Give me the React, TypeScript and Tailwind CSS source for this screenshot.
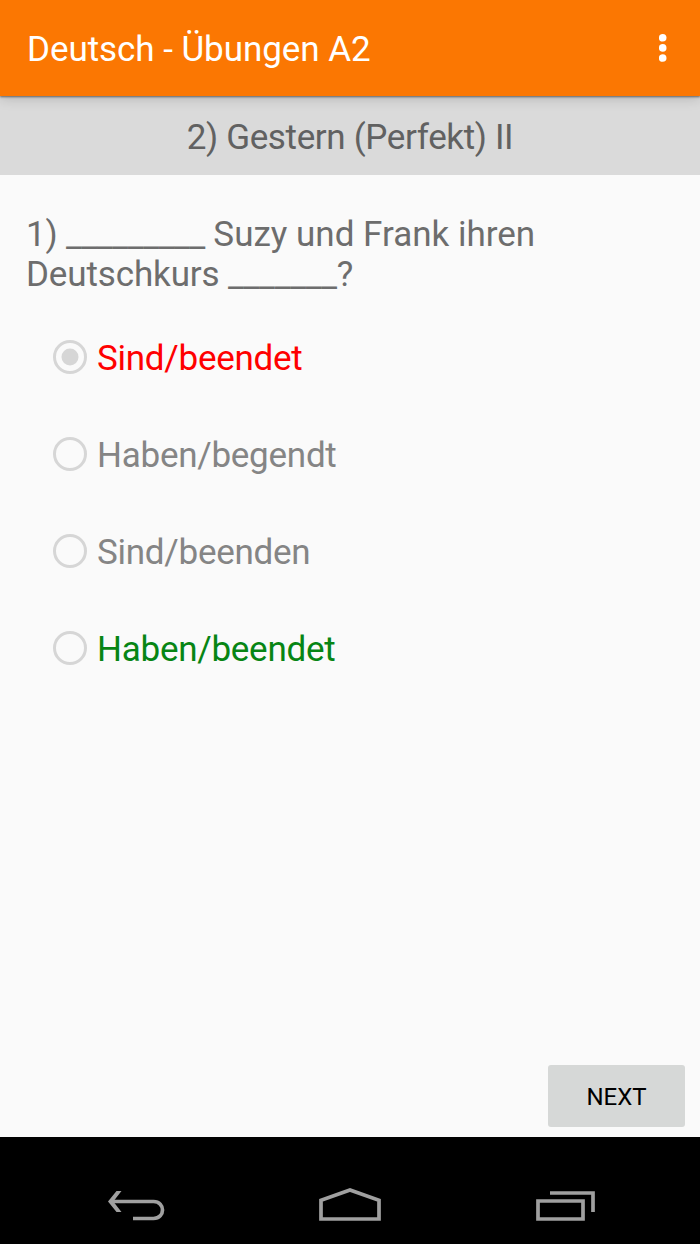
import React from 'react';

const options = [
  { label: 'Sind/beendet', color: 'text-[#ff0000]', selected: true },
  { label: 'Haben/begendt', color: 'text-[#858585]', selected: false },
  { label: 'Sind/beenden', color: 'text-[#858585]', selected: false },
  { label: 'Haben/beendet', color: 'text-[#078514]', selected: false },
];

function Radio({ selected }: { selected: boolean }) {
  return (
    <svg className="mb-0.5" width="34" height="34" viewBox="0 0 34 34" fill="none">
      <circle cx="17" cy="17" r="15.5" stroke="#d6d6d6" strokeWidth="3" />
      {selected && <circle cx="17" cy="17" r="8.5" fill="#d6d6d6" />}
    </svg>
  );
}

export default function App() {
  return (
    <div className="flex h-[1244px] w-[700px] flex-col overflow-hidden bg-[#fafafa] font-[Roboto,sans-serif]">
      <header className="z-10 flex h-24 shrink-0 items-center justify-between bg-[#fb7702] pr-[33px] pl-[27px] text-white shadow-[0_1px_2px_rgba(0,0,0,0.5),0_2px_12px_rgba(0,0,0,0.18)]">
        <h1 className="pt-1 text-[35px] leading-10 tracking-[-0.05px] whitespace-nowrap">Deutsch - Übungen A2</h1>
        <svg width="8" height="28" viewBox="0 0 8 28" fill="white">
          <circle cx="3.7" cy="3.8" r="3.8" />
          <circle cx="3.7" cy="13.9" r="3.8" />
          <circle cx="3.7" cy="24" r="3.8" />
        </svg>
      </header>
      <div className="flex h-[79px] shrink-0 items-center justify-center bg-[#dadada] pt-1 text-[35px] leading-10 tracking-[-0.36px] text-[#616161]">2) Gestern (Perfekt) II</div>
      <main className="flex flex-1 flex-col">
        <p className="mt-10 ml-[26px] text-[35px] leading-10 tracking-[-0.13px] whitespace-nowrap text-[#6d6d6d]">
          1)<span className="tracking-[-0.34px]"> _________ </span><span className="tracking-normal">Suzy und Frank ihren</span><br />Deutschkurs <span className="tracking-[-0.25px]">_______</span>?
        </p>
        <div className="mt-[14px] ml-[53px] flex flex-col">
          {options.map((o) => (
            <label key={o.label} className="flex h-[97.25px] items-center gap-[10px]">
              <Radio selected={o.selected} />
              <span className={`pt-0.5 text-[35px] leading-10 tracking-[-0.26px] whitespace-nowrap ${o.color}`}>{o.label}</span>
            </label>
          ))}
        </div>
        <button className="mt-auto mr-[15px] mb-[10px] h-[62px] w-[137px] self-end rounded-[3px] bg-[#d6d8d7] pt-0.5 text-[24px] text-black">NEXT</button>
      </main>
      <nav className="h-[107px] shrink-0 bg-black">
        <svg width="700" height="107" viewBox="0 1137 700 107" fill="none" stroke="#a0a0a0" strokeWidth="3.7">
          <path d="M111 1201.5H153.5C165.5 1201.5 165.5 1218.5 153.5 1218.5H133" />
          <path d="M116.5 1191H121.5L113.3 1201.5L121.5 1212H116.5L108 1201.5Z" fill="#a0a0a0" stroke="none" />
          <path d="M321 1219V1200.2L350 1190L379 1200.2V1219Z" />
          <path d="M538 1201H583V1219H538Z" />
          <path d="M550 1193H593V1212" />
        </svg>
      </nav>
    </div>
  );
}
